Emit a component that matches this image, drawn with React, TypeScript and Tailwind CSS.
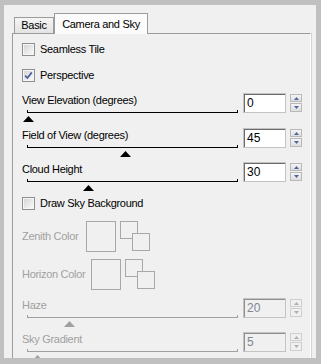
import React from "react";

const txt = "font-['Liberation_Sans',Arial,sans-serif] text-[11px] tracking-[-0.3px]";

function CheckBox({ label, checked }: { label: string; checked?: boolean }) {
  return (
    <div className="flex h-[13px] items-center">
      <div className="flex h-[13px] w-[13px] items-center justify-center border border-[#8e8f8f] bg-[#f4f4f4]">
        <div className="flex h-[11px] w-[11px] items-center justify-center border border-[#f6f6f6] bg-gradient-to-br from-[#d6d6d6] to-[#f8f8f8]">
          {checked && (
            <svg width="9" height="9" viewBox="0 0 9 9">
              <path d="M1.2 4.6 L3.4 7 L7.8 1.4" fill="none" stroke="#4b5f9a" strokeWidth="1.7" />
            </svg>
          )}
        </div>
      </div>
      <span className={`${txt} ml-[5px] leading-[13px] text-black`}>{label}</span>
    </div>
  );
}

function Slider({ thumb, disabled }: { thumb: number; disabled?: boolean }) {
  const line = disabled ? "border-[#a0a0a0]" : "border-black";
  const fill = disabled ? "#a0a0a0" : "#000000";
  return (
    <div className="relative ml-[5px] h-[11px] w-[211px]">
      <div className={`mt-[3px] h-[3px] border-b border-l border-r ${line}`} />
      <svg
        className="absolute top-[6px]"
        style={{ left: thumb }}
        width="11"
        height="6"
        viewBox="0 0 11 6"
      >
        <polygon points="5.5,0 11,6 0,6" fill={fill} />
      </svg>
    </div>
  );
}

function Spin({ disabled }: { disabled?: boolean }) {
  const btn = disabled
    ? "border-[#cfcfcf] bg-[#f0f0f0]"
    : "border-[#b9b9b9] bg-gradient-to-b from-[#f4f4f4] to-[#dedede]";
  const arrow = disabled ? "#b0b0b0" : "#4f6797";
  return (
    <div className="ml-[4px] flex h-[20px] w-[12px] flex-col justify-between py-[1px]">
      <div className={`flex h-[8px] items-center justify-center border ${btn}`}>
        <svg width="5" height="3" viewBox="0 0 5 3">
          <polygon points="2.5,0 5,3 0,3" fill={arrow} />
        </svg>
      </div>
      <div className={`flex h-[9px] items-center justify-center border ${btn}`}>
        <svg width="5" height="3" viewBox="0 0 5 3">
          <polygon points="0,0 5,0 2.5,3" fill={arrow} />
        </svg>
      </div>
    </div>
  );
}

function SliderRow({
  label,
  value,
  thumb,
  disabled,
  h = "h-[34px]",
}: {
  label: string;
  value: string;
  thumb: number;
  disabled?: boolean;
  h?: string;
}) {
  return (
    <div className={`flex ${h}`}>
      <div className="w-[216px]">
        <div className={`${txt} mt-[1px] h-[13px] leading-[13px] ${disabled ? "text-[#a0a0a0]" : "text-black"}`}>
          {label}
        </div>
        <Slider thumb={thumb} disabled={disabled} />
      </div>
      <div className="ml-[5px] h-[20px] w-[43px] border border-[#c3c3c3]">
        <div
          className={`h-full border-l border-t pl-[2px] font-['Liberation_Sans',Arial,sans-serif] text-[12px] leading-[17px] ${
            disabled ? "border-[#8f8f8f] bg-[#f0f0f0] text-[#7d8591]" : "border-[#6b6b6b] bg-white text-black"
          }`}
        >
          {value}
        </div>
      </div>
      <Spin disabled={disabled} />
    </div>
  );
}

function ColorRow({ label, labelW }: { label: string; labelW: string }) {
  return (
    <div className="flex h-[31px] items-center">
      <div className={`${txt} ${labelW} leading-[13px] text-[#a0a0a0]`}>{label}</div>
      <div className="h-[31px] w-[30px] border border-[#a8a8a8]" />
      <div className="relative ml-[4px] h-[30px] w-[30px] self-start">
        <div className="h-[18px] w-[18px] border border-[#a8a8a8]" />
        <div className="absolute left-[12px] top-[12px] h-[18px] w-[18px] border border-[#a8a8a8] bg-[#f0f0f0]" />
      </div>
    </div>
  );
}

export default function App() {
  return (
    <div className="h-[364px] w-[321px] bg-[#c0c0c0] pl-[4px] pt-[5px]">
      <div className="h-[353px] w-[312px] overflow-hidden bg-[#f0f0f0]">
        <div className="flex items-end pl-[10px] pt-[8px]">
          <div className={`${txt} flex h-[16px] w-[40px] items-center justify-center border-l border-r border-t border-[#9c9c9c] bg-gradient-to-b from-[#f5f5f5] to-[#e3e3e3] text-black`}>
            Basic
          </div>
          <div className={`${txt} relative z-10 -mb-[1px] flex h-[21px] w-[94px] items-center justify-center border-l border-r border-t border-[#9c9c9c] bg-[#fbfbfb] text-black`}>
            Camera and Sky
          </div>
        </div>
        <div className="ml-[8px] w-[299px] border-l border-r border-t border-[#9c9c9c] border-r-white pl-[9px] pt-[9px] shadow-[1px_0_0_#d4d4d4]">
          <CheckBox label="Seamless Tile" />
          <div className="mt-[13px]">
            <CheckBox label="Perspective" checked />
          </div>
          <div className="mt-[11px]">
            <SliderRow label="View Elevation (degrees)" value="0" thumb={-4} h="h-[35px]" />
            <SliderRow label="Field of View (degrees)" value="45" thumb={93} />
            <SliderRow label="Cloud Height" value="30" thumb={56} h="h-[35px]" />
          </div>
          <CheckBox label="Draw Sky Background" />
          <div className="mt-[11px]">
            <ColorRow label="Zenith Color" labelW="w-[64px]" />
          </div>
          <div className="mt-[7px]">
            <ColorRow label="Horizon Color" labelW="w-[69px]" />
          </div>
          <div className="mt-[8px]">
            <SliderRow label="Haze" value="20" thumb={37} disabled />
            <SliderRow label="Sky Gradient" value="5" thumb={5} disabled />
          </div>
        </div>
      </div>
    </div>
  );
}
